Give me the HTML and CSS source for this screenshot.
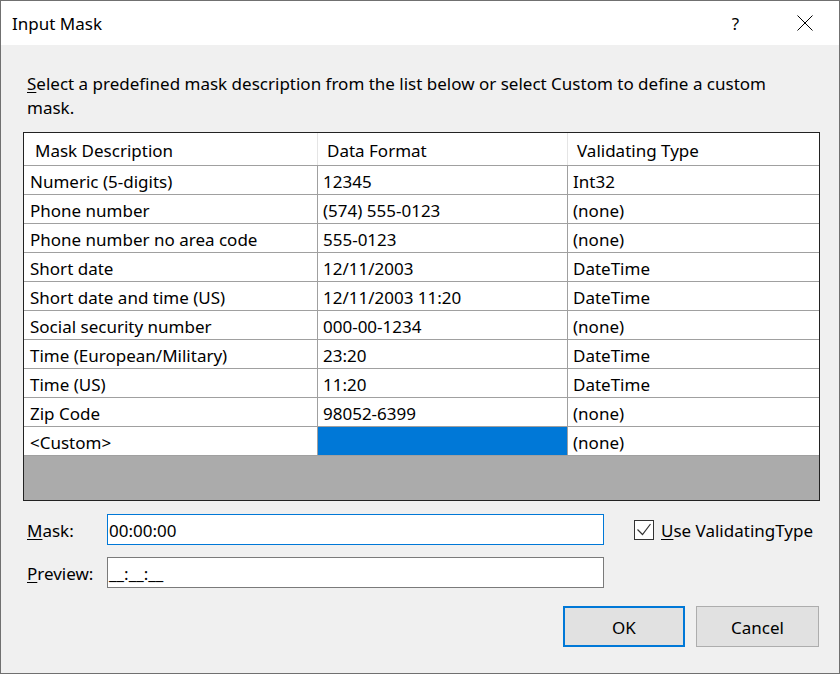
FILE: index.html
```html
<!DOCTYPE html>
<html>
<head>
<meta charset="utf-8">
<link rel="stylesheet" href="styles.css">
</head>
<body>
<div class="window">
  <div class="titlebar">
    <span class="title">Input Mask</span>
    <span class="tbtn help">?</span>
    <span class="tbtn close">
      <svg width="16" height="16" viewBox="0 0 16 16"><path d="M0.5 0.5 L15.5 15.5 M15.5 0.5 L0.5 15.5" stroke="#000" stroke-width="1" fill="none"/></svg>
    </span>
  </div>
  <div class="content">
    <p class="intro"><span class="key">S</span>elect a predefined mask description from the list below or select Custom to define a custom mask.</p>
    <div class="grid">
      <div class="row head">
        <div class="cell c1">Mask Description</div>
        <div class="cell c2">Data Format</div>
        <div class="cell c3">Validating Type</div>
      </div>
      <div class="row"><div class="cell c1">Numeric (5-digits)</div><div class="cell c2">12345</div><div class="cell c3">Int32</div></div>
      <div class="row"><div class="cell c1">Phone number</div><div class="cell c2">(574) 555-0123</div><div class="cell c3">(none)</div></div>
      <div class="row"><div class="cell c1">Phone number no area code</div><div class="cell c2">555-0123</div><div class="cell c3">(none)</div></div>
      <div class="row"><div class="cell c1">Short date</div><div class="cell c2">12/11/2003</div><div class="cell c3">DateTime</div></div>
      <div class="row"><div class="cell c1">Short date and time (US)</div><div class="cell c2">12/11/2003 11:20</div><div class="cell c3">DateTime</div></div>
      <div class="row"><div class="cell c1">Social security number</div><div class="cell c2">000-00-1234</div><div class="cell c3">(none)</div></div>
      <div class="row"><div class="cell c1">Time (European/Military)</div><div class="cell c2">23:20</div><div class="cell c3">DateTime</div></div>
      <div class="row"><div class="cell c1">Time (US)</div><div class="cell c2">11:20</div><div class="cell c3">DateTime</div></div>
      <div class="row"><div class="cell c1">Zip Code</div><div class="cell c2">98052-6399</div><div class="cell c3">(none)</div></div>
      <div class="row last"><div class="cell c1">&lt;Custom&gt;</div><div class="cell c2 selected"></div><div class="cell c3">(none)</div></div>
      <div class="filler"></div>
    </div>
    <div class="form">
      <span class="lbl"><span class="key">M</span>ask:</span>
      <div class="input focused">00:00:00</div>
      <div class="check">
        <span class="box"><svg width="18" height="18" viewBox="0 0 18 18"><path d="M2.5 8.5 L7.5 13.5 L15.5 3" stroke="#333" stroke-width="1.2" fill="none"/></svg></span>
        <span class="check-label"><span class="key">U</span>se ValidatingType</span>
      </div>
      <span class="lbl"><span class="key">P</span>review:</span>
      <div class="input">__:__:__</div>
    </div>
    <div class="buttons">
      <button class="btn ok">OK</button>
      <button class="btn cancel">Cancel</button>
    </div>
  </div>
</div>
</body>
</html>
```

FILE: styles.css
```css
html, body {
  margin: 0;
  padding: 0;
}
body {
  font-family: "Noto Sans", "Segoe UI", sans-serif;
  font-size: 17px;
  color: #000;
  background: #f0f0f0;
}
.key {
  text-decoration: underline;
  text-underline-offset: 2px;
}
.window {
  width: 840px;
  height: 674px;
  box-sizing: border-box;
  border: 1px solid #707070;
  background: #f0f0f0;
  display: flex;
  flex-direction: column;
}
.titlebar {
  height: 44px;
  flex: none;
  background: #fff;
  display: flex;
  align-items: center;
}
.title {
  flex: 1;
  padding: 2px 0 0 11px;
  line-height: 24px;
}
.tbtn {
  width: 69px;
  height: 44px;
  display: flex;
  align-items: center;
  justify-content: center;
}
.help {
  line-height: 24px;
  padding-top: 2px;
  box-sizing: border-box;
}
.close svg {
  display: block;
}
.content {
  flex: 1;
  padding: 0 19px 0 22px;
}
.intro {
  margin: 27px 0 0 4px;
  width: 780px;
  line-height: 24px;
}
.grid {
  margin-top: 12px;
  height: 369px;
  box-sizing: border-box;
  border: 1px solid #222;
  background: #ababab;
  display: flex;
  flex-direction: column;
}
.row {
  display: grid;
  grid-template-columns: 294px 250px 1fr;
  height: 29px;
  box-sizing: border-box;
  border-bottom: 1px solid #a0a0a0;
  background: #fff;
  flex: none;
}
.row.head {
  height: 33px;
}
.cell {
  box-sizing: border-box;
  padding: 3px 0 0 5px;
  line-height: 25px;
  white-space: nowrap;
  overflow: hidden;
}
.cell.c1, .cell.c2 {
  border-right: 1px solid #a0a0a0;
}
.cell.c1 {
  padding-left: 6px;
}
.head .cell {
  padding: 3px 0 0 9px;
  line-height: 29px;
}
.head .cell.c1 {
  padding-left: 11px;
}
.head .cell.c1, .head .cell.c2 {
  border-right-color: #e5e5e5;
}
.cell.selected {
  background: #0078d7;
}
.filler {
  flex: 1;
}
.form {
  margin-top: 13px;
  padding-left: 4px;
  display: grid;
  grid-template-columns: 80px 497px auto;
  row-gap: 12px;
  align-items: center;
}
.lbl {
  padding-top: 2px;
  line-height: 29px;
}
.input {
  height: 31px;
  box-sizing: border-box;
  border: 1px solid #7a7a7a;
  background: #fff;
  padding: 2px 0 0 1px;
  line-height: 27px;
  white-space: nowrap;
}
.input.focused {
  border-color: #0078d7;
}
.check {
  margin-left: 30px;
  display: flex;
  align-items: center;
  gap: 7px;
}
.box {
  width: 20px;
  height: 20px;
  box-sizing: border-box;
  border: 1px solid #333;
  background: #fff;
}
.box svg {
  display: block;
}
.check-label {
  padding-top: 2px;
  line-height: 24px;
}
.buttons {
  margin-top: 18px;
  margin-right: 1px;
  display: flex;
  justify-content: flex-end;
  gap: 11px;
}
.btn {
  font-family: "Noto Sans", "Segoe UI", sans-serif;
  font-size: 17px;
  color: #000;
  height: 41px;
  background: #e1e1e1;
  box-sizing: border-box;
  padding: 2px 0 0 0;
  margin: 0;
  line-height: 24px;
}
.btn.ok {
  width: 122px;
  border: 2px solid #0078d7;
}
.btn.cancel {
  width: 123px;
  border: 1px solid #adadad;
}
```
